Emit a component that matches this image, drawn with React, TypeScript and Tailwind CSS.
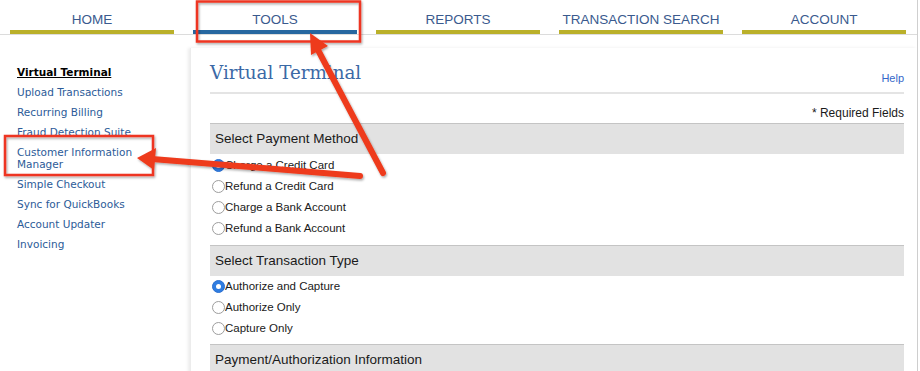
import React from "react";

const tabs = [
  { label: "HOME", active: false },
  { label: "TOOLS", active: true },
  { label: "REPORTS", active: false },
  { label: "TRANSACTION SEARCH", active: false },
  { label: "ACCOUNT", active: false },
];

const side = [
  "Upload Transactions",
  "Recurring Billing",
  "Fraud Detection Suite",
];
const side2 = ["Simple Checkout", "Sync for QuickBooks", "Account Updater", "Invoicing"];

function Radio({ checked, label }: { checked?: boolean; label: string }) {
  return (
    <div className="flex items-center h-[21px] pl-[2px]">
      {checked ? (
        <span className="w-[13px] h-[13px] rounded-full bg-[#2f7de1] border border-[#2a6fd0] flex items-center justify-center">
          <span className="w-[5px] h-[5px] rounded-full bg-white" />
        </span>
      ) : (
        <span className="w-[13px] h-[13px] rounded-full bg-white border border-[#9d9d9d]" />
      )}
      <span className="text-[11.5px] text-[#1a1a1a] leading-none">{label}</span>
    </div>
  );
}

function Section({ title }: { title: string }) {
  return (
    <div className="h-[31px] bg-[#e2e2e2] border-t border-[#c4c4c4] flex items-center pl-[5px] text-[13.5px] text-[#1a1a1a]">
      {title}
    </div>
  );
}

export default function App() {
  return (
    <div
      className="relative w-[920px] h-[371px] overflow-hidden bg-white"
      style={{ fontFamily: '"Liberation Sans", Arial, sans-serif' }}
    >
      <div className="w-[918px] h-[371px] border-r border-[#cfcfcf]">
        {/* Nav */}
        <div className="flex items-end gap-[19px] pl-[10px] h-[35px] border-b border-[#dcdcdc]">
          {tabs.map((t) => (
            <div key={t.label} className="w-[164px] flex flex-col items-center">
              <div className="text-[13.5px] text-[#3a5a8e] leading-none pb-[4px]">{t.label}</div>
              <div className={`w-full h-[4px] ${t.active ? "bg-[#2667a0]" : "bg-[#bab02a]"}`} />
            </div>
          ))}
        </div>

        <div className="flex">
          {/* Sidebar */}
          <div
            className="w-[190px] pl-[17px] pt-[27px] text-[10.5px] text-[#2c5b98] leading-[20px]"
            style={{ fontFamily: '"DejaVu Sans", Verdana, sans-serif' }}
          >
            <div className="font-bold text-black underline">Virtual Terminal</div>
            {side.map((s) => (
              <div key={s}>{s}</div>
            ))}
            <div className="leading-[12px] py-[4px]">
              Customer Information
              <br />
              Manager
            </div>
            {side2.map((s) => (
              <div key={s}>{s}</div>
            ))}
          </div>

          {/* Content */}
          <div className="flex-1 mt-[13px] pl-[19px] pr-[13px] shadow-[-2px_0_3px_rgba(0,0,0,0.08)] border-l border-[#ececec]">
            <div className="flex items-end justify-between h-[46px] border-b-2 border-[#e4e4e4] pb-[10px]">
              <div
                className="text-[18.3px] text-[#3b69a6] leading-none"
                style={{ fontFamily: '"DejaVu Serif", Georgia, serif' }}
              >
                Virtual Terminal
              </div>
              <div className="text-[11px] text-[#3467c9] leading-none mb-[-2px]">Help</div>
            </div>
            <div className="text-right text-[12px] text-[#1a1a1a] pt-[13px] pb-[4px] leading-none">* Required Fields</div>
            <Section title="Select Payment Method" />
            <div className="pt-[1px] pb-[6px]">
              <Radio checked label="Charge a Credit Card" />
              <Radio label="Refund a Credit Card" />
              <Radio label="Charge a Bank Account" />
              <Radio label="Refund a Bank Account" />
            </div>
            <Section title="Select Transaction Type" />
            <div className="pt-[0px] pb-[5px]">
              <Radio checked label="Authorize and Capture" />
              <Radio label="Authorize Only" />
              <Radio label="Capture Only" />
            </div>
            <Section title="Payment/Authorization Information" />
          </div>
        </div>
      </div>

      {/* Annotation overlay */}
      <svg className="absolute inset-0 pointer-events-none" width="920" height="371" viewBox="0 0 920 371">
        <defs>
          <filter id="sh" x="-20%" y="-20%" width="140%" height="140%">
            <feDropShadow dx="1" dy="1.5" stdDeviation="1.2" floodColor="#000" floodOpacity="0.35" />
          </filter>
        </defs>
        <g filter="url(#sh)">
          <rect x="197" y="1.5" width="163" height="40" fill="none" stroke="#ee3524" strokeWidth="2.5" />
          <rect x="5" y="136" width="148" height="39" fill="none" stroke="#ee3524" strokeWidth="2.5" />
          <line x1="383" y1="173" x2="318" y2="50" stroke="#ee3a1c" strokeWidth="6" strokeLinecap="round" />
          <polygon points="310,33 328,46 311,55" fill="#ee3a1c" />
          <line x1="360" y1="176" x2="152" y2="159" stroke="#ee3a1c" strokeWidth="6" strokeLinecap="round" />
          <polygon points="137,158 156,148 154,170" fill="#ee3a1c" />
        </g>
      </svg>
    </div>
  );
}
